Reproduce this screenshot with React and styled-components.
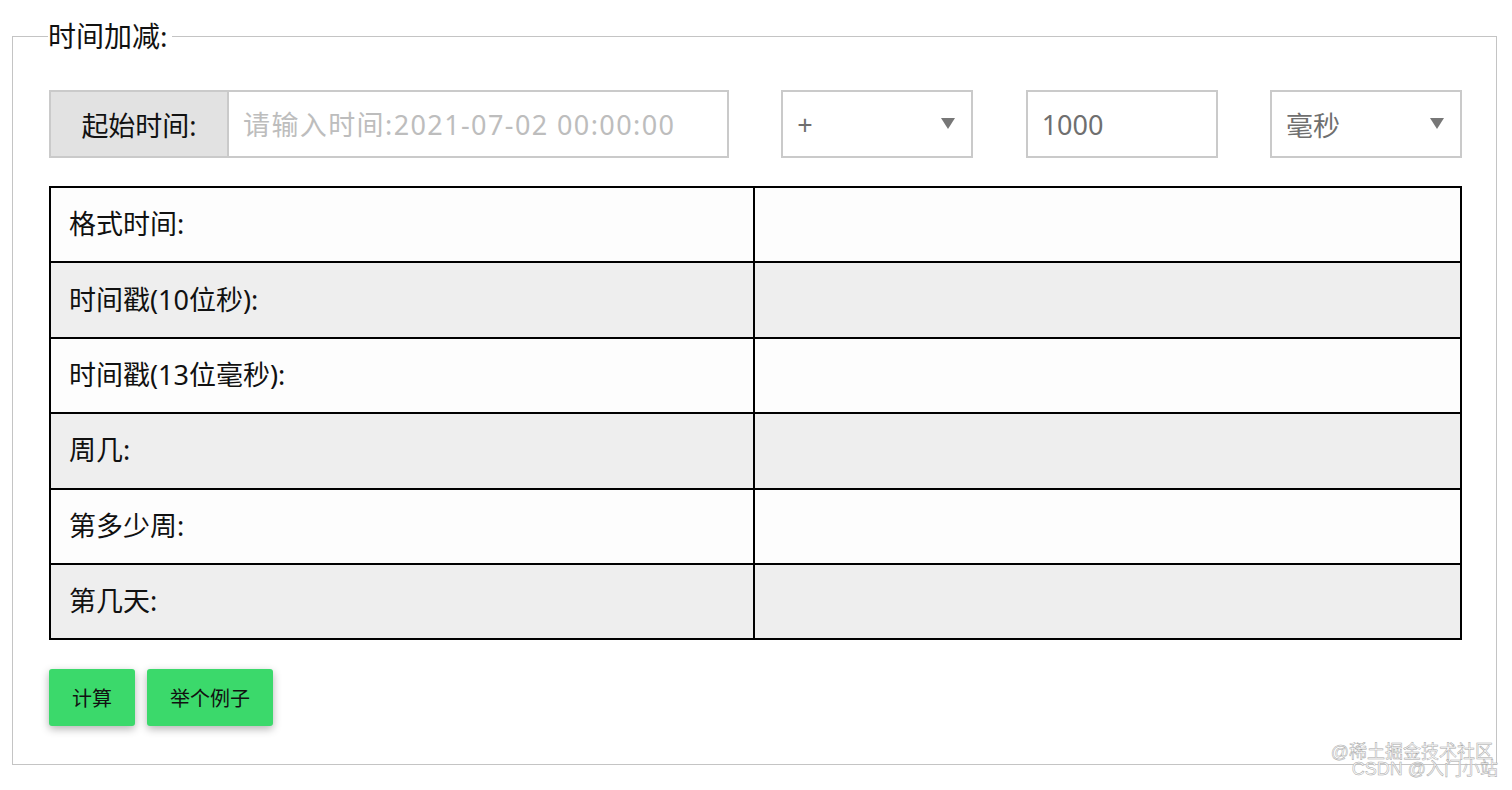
import React from "react";
import styled, { createGlobalStyle } from "styled-components";

const GlobalStyle = createGlobalStyle`
  html, body {
    margin: 0;
    padding: 0;
    background: #ffffff;
  }
  body {
    font-family: "Noto Sans", "Noto Sans CJK SC", sans-serif;
    color: #111;
  }
`;

const rows = [
  "格式时间:",
  "时间戳(10位秒):",
  "时间戳(13位毫秒):",
  "周几:",
  "第多少周:",
  "第几天:",
];

export default function App() {
  return (
    <Page>
      <GlobalStyle />
      <Panel>
        <Legend>时间加减:</Legend>
        <Toolbar>
          <InputGroup>
            <GroupLabel>起始时间:</GroupLabel>
            <TextInput placeholder="请输入时间:2021-07-02 00:00:00" />
          </InputGroup>
          <SelectBox>
            <span>+</span>
            <Caret />
          </SelectBox>
          <NumberBox>1000</NumberBox>
          <SelectBox>
            <span>毫秒</span>
            <Caret />
          </SelectBox>
        </Toolbar>
        <ResultTable>
          <tbody>
            {rows.map((label, i) => (
              <Row key={label} $striped={i % 2 === 1}>
                <LabelCell>{label}</LabelCell>
                <ValueCell />
              </Row>
            ))}
          </tbody>
        </ResultTable>
        <Actions>
          <GreenButton>计算</GreenButton>
          <GreenButton>举个例子</GreenButton>
        </Actions>
      </Panel>
      <Watermark>
        <WatermarkLine $shift={5}>@稀土掘金技术社区</WatermarkLine>
        <WatermarkLine>CSDN @入门小站</WatermarkLine>
      </Watermark>
    </Page>
  );
}

const Page = styled.div`
  position: relative;
  padding: 20px 15px 0 12px;
  height: 790px;
  box-sizing: border-box;
`;

const Panel = styled.fieldset`
  margin: 0;
  border: 1.5px solid #c4c4c4;
  padding: 38px 34px 38px 36px;
  min-width: 0;
`;

const Legend = styled.legend`
  font-family: "Noto Sans", "Noto Sans CJK SC", sans-serif;
  font-size: 28px;
  line-height: 32px;
  padding: 0 4px 0 0;
  margin-left: -1px;
  color: #111;
`;

const Toolbar = styled.div`
  display: flex;
  justify-content: space-between;
  align-items: stretch;
  height: 68px;
  margin-bottom: 28px;
`;

const InputGroup = styled.div`
  display: flex;
  width: 680px;
  border: 2px solid #cacaca;
  box-sizing: border-box;
`;

const GroupLabel = styled.div`
  width: 176px;
  flex: none;
  display: flex;
  align-items: center;
  justify-content: center;
  background: #e2e2e2;
  border-right: 2px solid #cacaca;
  font-size: 27px;
  color: #111;
`;

const TextInput = styled.input`
  flex: 1;
  min-width: 0;
  border: none;
  outline: none;
  padding: 0 14px;
  background: #fff;
  font-family: "Noto Sans", "Noto Sans CJK SC", sans-serif;
  font-size: 27px;
  letter-spacing: 1.4px;
  color: #333;
  &::placeholder {
    color: #bdbdbd;
  }
`;

const BoxBase = styled.div`
  width: 192px;
  box-sizing: border-box;
  border: 2px solid #cacaca;
  display: flex;
  align-items: center;
  padding: 0 16px 0 14px;
  font-size: 27px;
  color: #6f6f6f;
  background: #fff;
`;

const SelectBox = styled(BoxBase)`
  justify-content: space-between;
`;

const NumberBox = styled(BoxBase)``;

const Caret = styled.span`
  width: 0;
  height: 0;
  border-left: 7px solid transparent;
  border-right: 7px solid transparent;
  border-top: 11px solid #777;
  margin-top: -2px;
`;

const ResultTable = styled.table`
  width: 100%;
  border-collapse: collapse;
  border: 2px solid #000;
`;

const Row = styled.tr`
  height: 75.4px;
  background: ${(p) => (p.$striped ? "#eeeeee" : "#fdfdfd")};
`;

const LabelCell = styled.td`
  width: 684px;
  border: 2px solid #000;
  padding: 0 0 4px 18px;
  font-size: 27px;
  color: #111;
`;

const ValueCell = styled.td`
  border: 2px solid #000;
`;

const Actions = styled.div`
  display: flex;
  gap: 12px;
  margin-top: 29px;
`;

const GreenButton = styled.button`
  height: 57px;
  padding: 0 23px;
  border: none;
  border-radius: 3px;
  background: #3bd96b;
  box-shadow: 0 3px 8px rgba(0, 0, 0, 0.3);
  font-family: "Noto Sans CJK SC", sans-serif;
  font-size: 20px;
  color: #111;
  cursor: pointer;
`;

const Watermark = styled.div`
  position: absolute;
  right: 14px;
  top: 744px;
  text-align: right;
  font-family: "Liberation Sans", "Noto Sans CJK SC", sans-serif;
  font-size: 18px;
  line-height: 17px;
  color: #ffffff;
  -webkit-text-stroke: 0.5px #a6a6a6;
`;

const WatermarkLine = styled.div`
  margin-right: ${(p) => p.$shift || 0}px;
`;
